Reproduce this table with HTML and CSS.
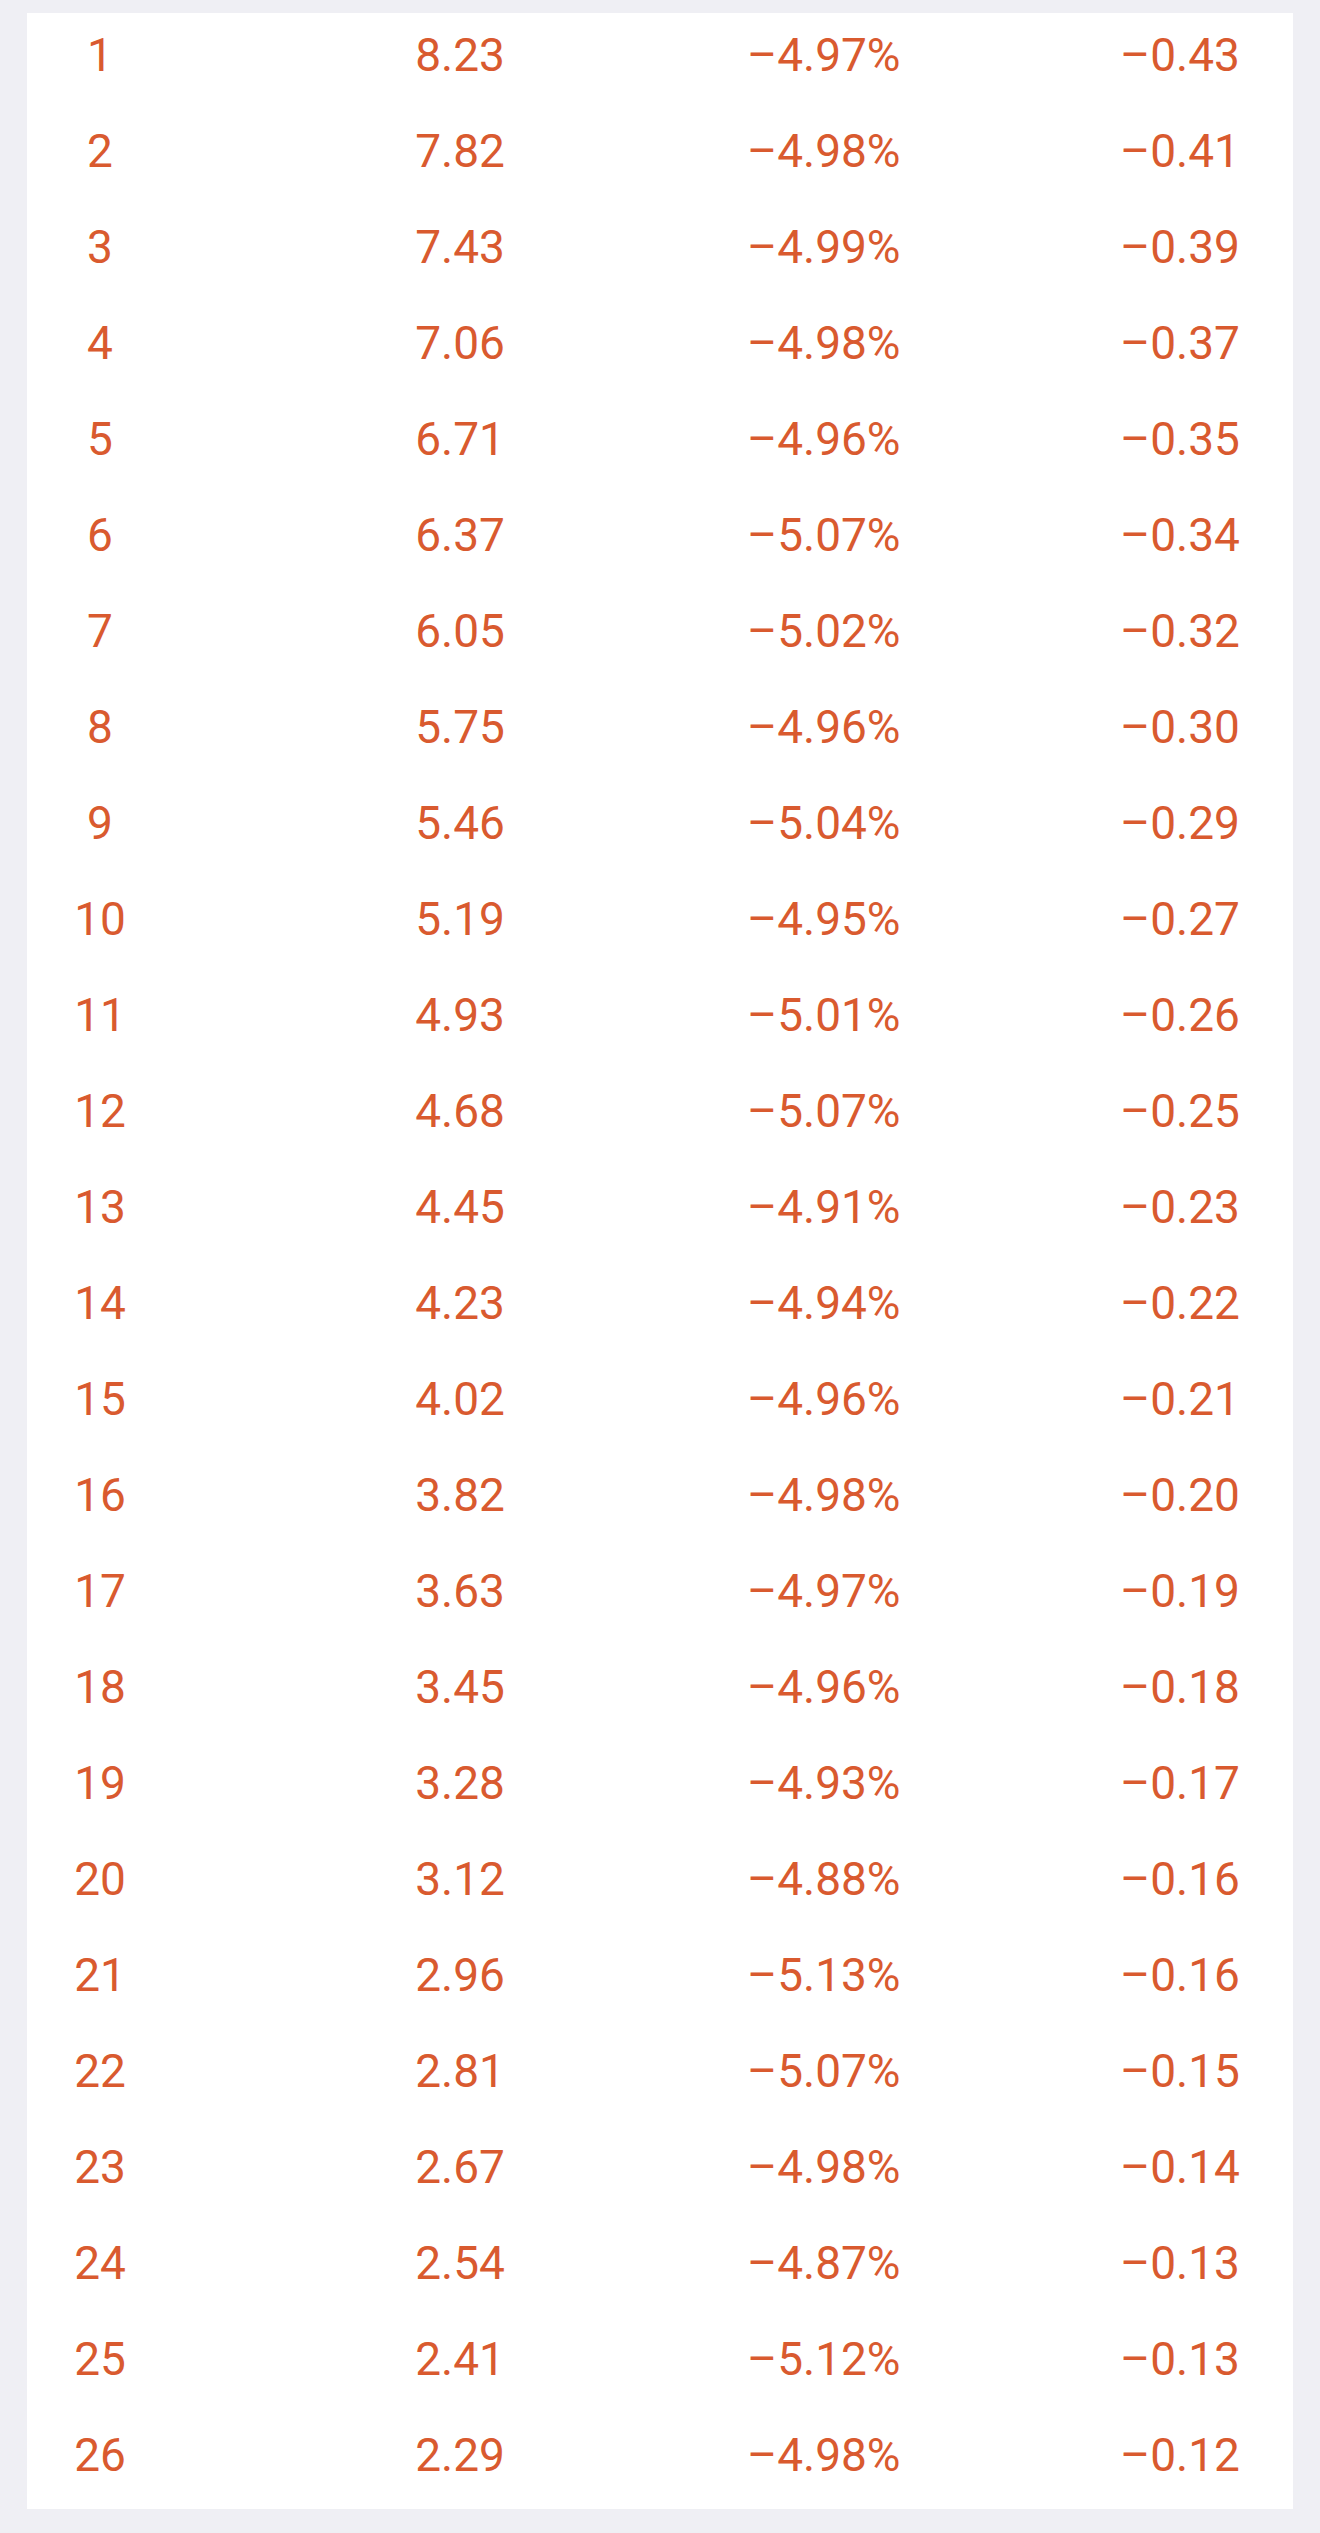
FILE: index.html
```html
<!DOCTYPE html>
<html lang="zh">
<head>
<meta charset="utf-8">
<title>Table</title>
<link rel="stylesheet" href="styles.css">
</head>
<body>
<div class="card">
  <div class="row"><span class="cell">1</span><span class="cell">8.23</span><span class="cell">–4.97%</span><span class="cell">–0.43</span></div>
  <div class="row"><span class="cell">2</span><span class="cell">7.82</span><span class="cell">–4.98%</span><span class="cell">–0.41</span></div>
  <div class="row"><span class="cell">3</span><span class="cell">7.43</span><span class="cell">–4.99%</span><span class="cell">–0.39</span></div>
  <div class="row"><span class="cell">4</span><span class="cell">7.06</span><span class="cell">–4.98%</span><span class="cell">–0.37</span></div>
  <div class="row"><span class="cell">5</span><span class="cell">6.71</span><span class="cell">–4.96%</span><span class="cell">–0.35</span></div>
  <div class="row"><span class="cell">6</span><span class="cell">6.37</span><span class="cell">–5.07%</span><span class="cell">–0.34</span></div>
  <div class="row"><span class="cell">7</span><span class="cell">6.05</span><span class="cell">–5.02%</span><span class="cell">–0.32</span></div>
  <div class="row"><span class="cell">8</span><span class="cell">5.75</span><span class="cell">–4.96%</span><span class="cell">–0.30</span></div>
  <div class="row"><span class="cell">9</span><span class="cell">5.46</span><span class="cell">–5.04%</span><span class="cell">–0.29</span></div>
  <div class="row"><span class="cell">10</span><span class="cell">5.19</span><span class="cell">–4.95%</span><span class="cell">–0.27</span></div>
  <div class="row"><span class="cell">11</span><span class="cell">4.93</span><span class="cell">–5.01%</span><span class="cell">–0.26</span></div>
  <div class="row"><span class="cell">12</span><span class="cell">4.68</span><span class="cell">–5.07%</span><span class="cell">–0.25</span></div>
  <div class="row"><span class="cell">13</span><span class="cell">4.45</span><span class="cell">–4.91%</span><span class="cell">–0.23</span></div>
  <div class="row"><span class="cell">14</span><span class="cell">4.23</span><span class="cell">–4.94%</span><span class="cell">–0.22</span></div>
  <div class="row"><span class="cell">15</span><span class="cell">4.02</span><span class="cell">–4.96%</span><span class="cell">–0.21</span></div>
  <div class="row"><span class="cell">16</span><span class="cell">3.82</span><span class="cell">–4.98%</span><span class="cell">–0.20</span></div>
  <div class="row"><span class="cell">17</span><span class="cell">3.63</span><span class="cell">–4.97%</span><span class="cell">–0.19</span></div>
  <div class="row"><span class="cell">18</span><span class="cell">3.45</span><span class="cell">–4.96%</span><span class="cell">–0.18</span></div>
  <div class="row"><span class="cell">19</span><span class="cell">3.28</span><span class="cell">–4.93%</span><span class="cell">–0.17</span></div>
  <div class="row"><span class="cell">20</span><span class="cell">3.12</span><span class="cell">–4.88%</span><span class="cell">–0.16</span></div>
  <div class="row"><span class="cell">21</span><span class="cell">2.96</span><span class="cell">–5.13%</span><span class="cell">–0.16</span></div>
  <div class="row"><span class="cell">22</span><span class="cell">2.81</span><span class="cell">–5.07%</span><span class="cell">–0.15</span></div>
  <div class="row"><span class="cell">23</span><span class="cell">2.67</span><span class="cell">–4.98%</span><span class="cell">–0.14</span></div>
  <div class="row"><span class="cell">24</span><span class="cell">2.54</span><span class="cell">–4.87%</span><span class="cell">–0.13</span></div>
  <div class="row"><span class="cell">25</span><span class="cell">2.41</span><span class="cell">–5.12%</span><span class="cell">–0.13</span></div>
  <div class="row"><span class="cell">26</span><span class="cell">2.29</span><span class="cell">–4.98%</span><span class="cell">–0.12</span></div>
</div>
</body>
</html>
```

FILE: styles.css
```css
html, body {
  margin: 0;
  padding: 0;
}

body {
  background: #efeff4;
  padding: 13px 27px 24px;
  font-family: Roboto, "Noto Sans CJK SC", sans-serif;
}

.card {
  background: #ffffff;
  display: flex;
  flex-direction: column;
}

.row {
  display: grid;
  grid-template-columns: repeat(4, 146px);
  column-gap: 214px;
  height: 96px;
  box-sizing: border-box;
  padding-bottom: 12px;
}

.cell {
  text-align: center;
  font-size: 46px;
  line-height: 84px;
  font-weight: 400;
  color: #d95a2f;
  white-space: nowrap;
}
```
